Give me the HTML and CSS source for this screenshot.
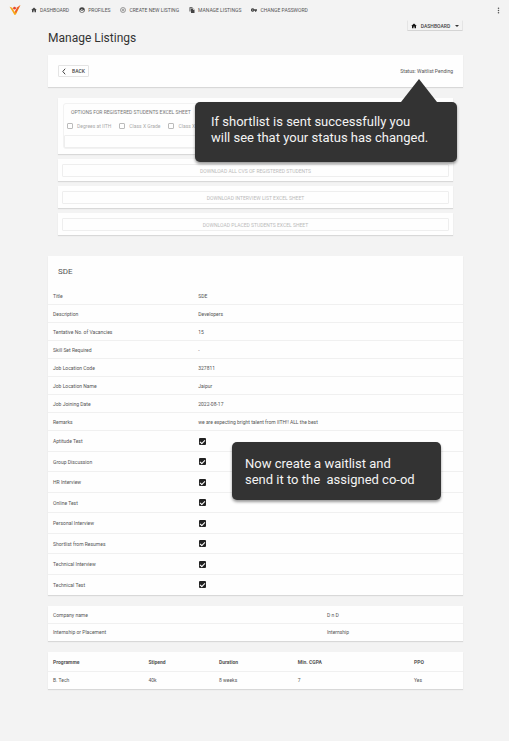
FILE: index.html
```html
<!DOCTYPE html>
<html lang="en">
<head>
<meta charset="utf-8">
<title>Manage Listings</title>
<link rel="stylesheet" href="styles.css">
</head>
<body>
<nav class="nav">
  <svg class="logo" viewBox="0 0 24 22" aria-hidden="true"><path fill="#f7a81b" d="M0 4l6 2 5 9 5-4 6-9 2-2-10 21-3 1z"/><path fill="#ef5a2a" d="M24 0l-7 5-5 9 2 4z"/><circle fill="#e8472b" cx="11" cy="7" r="3"/></svg>
  <a href="#"><svg viewBox="0 0 24 24"><path d="M10 21v-7h4v7h6v-9h3L12 2 1 12h3v9z"/></svg>Dashboard</a>
  <a href="#"><svg viewBox="0 0 24 24"><path fill-rule="evenodd" d="M12 1a11 11 0 1 0 0 22 11 11 0 0 0 0-22zM4 13c4-1 6-3 7-5 2 3 5 4 9 4a8 8 0 0 1-16 1zm5-1a1.5 1.5 0 1 0 0 4 1.5 1.5 0 0 0 0-4zm6 0a1.5 1.5 0 1 0 0 4 1.5 1.5 0 0 0 0-4z"/></svg>Profiles</a>
  <a href="#"><svg viewBox="0 0 24 24"><path fill="none" stroke="currentColor" stroke-width="2" d="M12 2a10 10 0 1 0 0 20 10 10 0 0 0 0-20zM12 7v10M7 12h10"/></svg>Create New Listing</a>
  <a href="#"><svg viewBox="0 0 24 24"><path d="M2 1h12v3H6v14H2zM8 6h8v6h6v12H8zm10-1 5 5h-5z"/></svg>Manage Listings</a>
  <a href="#"><svg viewBox="0 0 24 24"><path fill-rule="evenodd" d="M7 5a7 7 0 1 0 6 10h3v4h5v-4h3V9H13a7 7 0 0 0-6-4zm0 5a2 2 0 1 1 0 4 2 2 0 0 1 0-4z"/></svg>Change Password</a>
  <button class="more" type="button" aria-label="More"><svg viewBox="0 0 6 18"><circle cx="3" cy="3" r="2"/><circle cx="3" cy="9" r="2"/><circle cx="3" cy="15" r="2"/></svg></button>
</nav>
<main class="page">
  <header class="heading">
    <h1>Manage Listings</h1>
    <button class="switch" type="button"><svg viewBox="0 0 24 24"><path d="M10 21v-7h4v7h6v-9h3L12 2 1 12h3v9z"/></svg>Dashboard<i class="caret"></i></button>
  </header>

  <section class="card status">
    <button class="back" type="button"><svg viewBox="0 0 10 16"><path fill="none" stroke="currentColor" stroke-width="2.5" d="M8 1 2 8l6 7"/></svg>Back</button>
    <span>Status: Waitlist Pending</span>
    <div class="tip tip-status" role="tooltip">If shortlist is sent successfully you<br>will see that your status has changed.</div>
  </section>

  <div class="downloads">
    <section class="card options">
      <div class="group">
        <h2>Options for registered students excel sheet</h2>
        <div class="checks">
          <label><input type="checkbox" disabled>Degrees at IITH</label>
          <label><input type="checkbox" disabled>Class X Grade</label>
          <label><input type="checkbox" disabled>Class XII Grade</label>
        </div>
        <button type="button" disabled aria-label="Download registered students"></button>
      </div>
    </section>
    <section class="card download"><button type="button" disabled>Download all CVs of registered students</button></section>
    <section class="card download"><button type="button" disabled>Download interview list excel sheet</button></section>
    <section class="card download"><button type="button" disabled>Download placed students excel sheet</button></section>
  </div>

  <section class="card listing">
    <h2>SDE</h2>
    <table class="details">
      <tbody>
        <tr><th scope="row">Title</th><td>SDE</td></tr>
        <tr><th scope="row">Description</th><td>Developers</td></tr>
        <tr><th scope="row">Tentative No. of Vacancies</th><td>15</td></tr>
        <tr><th scope="row">Skill Set Required</th><td>-</td></tr>
        <tr><th scope="row">Job Location Code</th><td>327811</td></tr>
        <tr><th scope="row">Job Location Name</th><td>Jaipur</td></tr>
        <tr><th scope="row">Job Joining Date</th><td>2022-08-17</td></tr>
        <tr><th scope="row">Remarks</th><td>we are expecting bright talent from IITH!! ALL the best</td></tr>
      </tbody>
      <tbody class="rounds">
        <tr><th scope="row"><label for="r1">Aptitude Test</label></th><td><input id="r1" type="checkbox" checked></td></tr>
        <tr><th scope="row"><label for="r2">Group Discussion</label></th><td><input id="r2" type="checkbox" checked></td></tr>
        <tr><th scope="row"><label for="r3">HR Interview</label></th><td><input id="r3" type="checkbox" checked></td></tr>
        <tr><th scope="row"><label for="r4">Online Test</label></th><td><input id="r4" type="checkbox" checked></td></tr>
        <tr><th scope="row"><label for="r5">Personal Interview</label></th><td><input id="r5" type="checkbox" checked></td></tr>
        <tr><th scope="row"><label for="r6">Shortlist from Resumes</label></th><td><input id="r6" type="checkbox" checked></td></tr>
        <tr><th scope="row"><label for="r7">Technical Interview</label></th><td><input id="r7" type="checkbox" checked></td></tr>
        <tr><th scope="row"><label for="r8">Technical Test</label></th><td><input id="r8" type="checkbox" checked></td></tr>
      </tbody>
    </table>
    <div class="tip tip-waitlist" role="tooltip">Now create a waitlist and<br>send it to the&nbsp; assigned co-od</div>
  </section>

  <section class="card">
    <table class="company">
      <tr><th scope="row">Company name</th><td>D n D</td></tr>
      <tr><th scope="row">Internship or Placement</th><td>Internship</td></tr>
    </table>
  </section>

  <section class="card">
    <table class="programmes">
      <thead><tr><th>Programme</th><th>Stipend</th><th>Duration</th><th>Min. CGPA</th><th>PPO</th></tr></thead>
      <tbody><tr><td>B. Tech</td><td>40k</td><td>8 weeks</td><td>7</td><td>Yes</td></tr></tbody>
    </table>
  </section>
</main>
</body>
</html>
```
FILE: styles.css
```css
* { box-sizing: border-box; }

body {
  margin: 0;
  min-height: 100vh;
  background: #f3f3f3;
  color: #555;
  font: 5px/8px Roboto, "Liberation Sans", sans-serif;
}

svg { fill: currentColor; flex: none; }

button {
  font: inherit;
  color: inherit;
  text-transform: uppercase;
  background: none;
  border: 1px solid #e4e4e4;
  border-radius: 1px;
  padding: 0;
}

.nav {
  display: flex;
  align-items: center;
  gap: 10px;
  height: 20px;
  padding: 0 9px;
  white-space: nowrap;
}
.nav a {
  display: flex;
  align-items: center;
  gap: 3px;
  color: #555;
  text-decoration: none;
  text-transform: uppercase;
}
.nav a svg { width: 6px; height: 6px; color: #444; }
.nav .logo { width: 12px; height: 10px; }
.more {
  display: flex;
  margin-left: auto;
  border: 0;
}
.more svg { width: 3px; height: 7px; }

.page { padding: 0 46px 50px 48px; }

.heading {
  display: flex;
  justify-content: space-between;
  align-items: flex-start;
}
h1 {
  margin: 11px 0 10px;
  font-size: 12px;
  font-weight: 400;
  line-height: 14px;
  color: #333;
}
.switch {
  display: flex;
  align-items: center;
  justify-content: center;
  gap: 4px;
  width: 56px;
  height: 11px;
  border-color: transparent #e4e4e4 #d4d4d4;
  color: #444;
  font-weight: 500;
}
.switch svg { width: 6px; height: 6px; color: #111; }
.caret {
  margin-left: 1px;
  border: 2px solid transparent;
  border-top-color: #333;
  border-bottom: 0;
}

.card {
  margin-bottom: 11px;
  background: #fefefe;
  box-shadow: 0 1px 1px #d8d8d8;
}

.status {
  position: relative;
  display: flex;
  align-items: center;
  justify-content: space-between;
  height: 32px;
  padding: 0 10px;
}
.back {
  display: flex;
  align-items: center;
  justify-content: center;
  gap: 6px;
  width: 31px;
  height: 12px;
  color: #444;
  font-weight: 500;
}
.back svg { width: 4px; height: 7px; }

.downloads { padding: 0 10px; margin-bottom: 21px; }
.downloads .card { margin-bottom: 5px; }
.downloads button {
  display: block;
  width: 100%;
  height: 13px;
  border-color: #eee;
  color: #bbb;
}
.options { padding: 5px; }
.group {
  border: 1px solid #f2f2f2;
  border-radius: 3px;
  padding-top: 4px;
}
.group h2 {
  margin: 0 7px;
  font-size: 5px;
  font-weight: 400;
  line-height: 8px;
  color: #777;
  text-transform: uppercase;
}
.checks {
  display: flex;
  gap: 8px;
  height: 19px;
  padding: 0 3px;
  color: #aaa;
}
.checks label { display: flex; align-items: center; gap: 4px; }
.download { padding: 5px 4px 4px; }

input[type="checkbox"] {
  appearance: none;
  display: block;
  width: 6px;
  height: 6px;
  margin: 0;
  border: 1px solid #bbb;
  border-radius: 1px;
}
input[type="checkbox"]:checked {
  display: grid;
  place-items: center;
  width: 7px;
  height: 7px;
  border: 0;
  background: #222;
}
input[type="checkbox"]:checked::before {
  content: "";
  width: 4px;
  height: 2px;
  border: solid #fff;
  border-width: 0 0 1px 1px;
  transform: rotate(-45deg);
}

.listing { position: relative; }
.listing h2 {
  margin: 0;
  padding: 10px 10px 9px;
  font-size: 8px;
  font-weight: 400;
  line-height: 12px;
}

table {
  width: 100%;
  table-layout: fixed;
  border-collapse: separate;
  border-spacing: 0;
}
th, td {
  height: 18px;
  padding: 0 5px;
  border-bottom: 1px solid #f0f0f0;
  text-align: left;
  font-weight: 400;
}
.rounds th, .rounds td { height: 21px; }
.rounds tr:nth-child(even) > * { height: 20px; }
.rounds input { margin-left: 1px; }
.details th { width: 35%; }
.company th { width: 66%; }
.card tbody:last-child tr:last-child > * { border-bottom-color: transparent; }
.company tr:last-child > *, .programmes td { height: 17px; }
.programmes thead th { height: 20px; font-weight: 700; }
.programmes th:nth-child(1) { width: 23%; }
.programmes th:nth-child(2) { width: 17%; }
.programmes th:nth-child(3) { width: 19%; }
.programmes th:nth-child(4) { width: 28%; }

.tip {
  position: absolute;
  z-index: 1;
  border-radius: 5px;
  background: #333;
  color: #f4f4f4;
  box-shadow: 0 2px 3px #0006;
  font-size: 13px;
  line-height: 16px;
  white-space: nowrap;
}
.tip-status {
  top: 47px;
  right: 6px;
  width: 262px;
  padding: 12px 16px 16px;
}
.tip-status::before {
  content: "";
  position: absolute;
  right: 20px;
  bottom: 100%;
  border: 18px solid transparent;
  border-top: 0;
  border-bottom: 23px solid #333;
}
.tip-waitlist {
  top: 186px;
  right: 22px;
  width: 209px;
  padding: 14px 13px 12px;
}
```
